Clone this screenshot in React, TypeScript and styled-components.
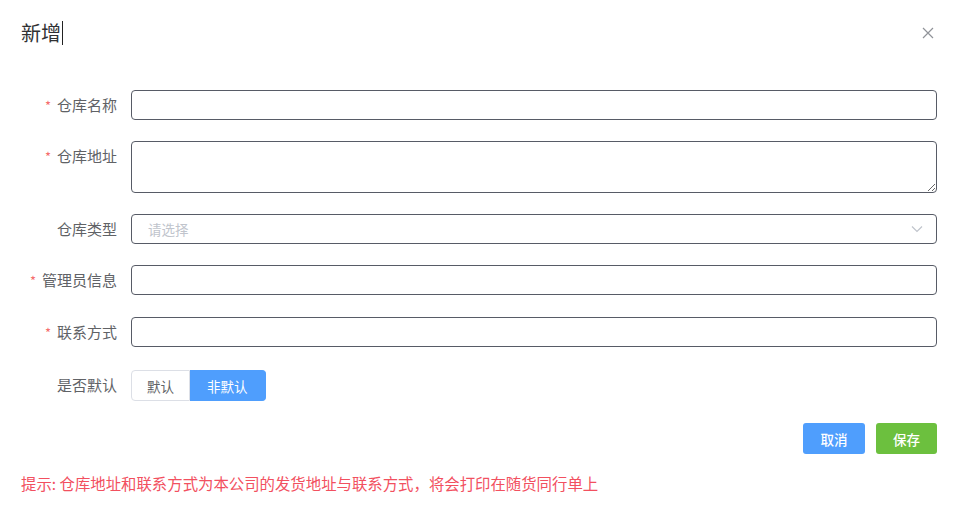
import React from "react";
import styled, { createGlobalStyle } from "styled-components";

const Global = createGlobalStyle`
  html, body { margin: 0; padding: 0; background: #fff; }
  body { font-family: "Noto Sans CJK SC", "Noto Sans", sans-serif; color: #606266; }
  * { box-sizing: border-box; }
`;

const Dialog = styled.div`
  width: 953px;
  height: 517px;
  padding: 21px 16px 0 21px;
  background: #fff;
`;

const Header = styled.div`
  display: flex;
  align-items: center;
  justify-content: space-between;
  height: 24px;
`;

const Title = styled.div`
  display: flex;
  align-items: center;
  font-size: 20px;
  line-height: 24px;
  color: #303133;
`;

const Caret = styled.span`
  display: inline-block;
  width: 1px;
  height: 24px;
  margin-left: 1px;
  background: #222;
`;

const Close = styled.button`
  border: 0;
  background: none;
  padding: 0;
  margin-right: 2px;
  width: 14px;
  height: 14px;
  display: flex;
  align-items: center;
  justify-content: center;
  cursor: pointer;
`;

const Form = styled.div`
  margin-top: 45px;
`;

const Item = styled.div<{ $mb?: number }>`
  display: flex;
  align-items: flex-start;
  margin-bottom: ${(p) => p.$mb ?? 21}px;
`;

const Label = styled.label`
  width: 110px;
  height: 30px;
  flex: none;
  text-align: right;
  padding-right: 14px;
  font-size: 15px;
  line-height: 30px;
  color: #606266;
  white-space: nowrap;
`;

const Star = styled.span`
  color: #f56c6c;
  margin-right: 6px;
  font-size: 13px;
  line-height: 1;
`;

const Input = styled.input`
  flex: 1;
  height: 30px;
  border: 1px solid #575b66;
  border-radius: 4px;
  padding: 0 15px;
  font-size: 14px;
  font-family: inherit;
  color: #606266;
  outline: none;
  background: #fff;
`;

const TextArea = styled.textarea`
  flex: 1;
  height: 52px;
  border: 1px solid #575b66;
  border-radius: 4px;
  padding: 5px 15px;
  font-size: 14px;
  font-family: inherit;
  color: #606266;
  outline: none;
  resize: vertical;
  display: block;
`;

const Select = styled.div`
  flex: 1;
  height: 30px;
  border: 1px solid #575b66;
  border-radius: 4px;
  padding: 0 13px 0 16px;
  display: flex;
  align-items: center;
  justify-content: space-between;
`;

const Placeholder = styled.span`
  font-size: 13.5px;
  color: #c0c4cc;
`;

const RadioGroup = styled.div`
  display: flex;
  height: 31px;
`;

const RadioButton = styled.button<{ $active?: boolean; $first?: boolean }>`
  height: 31px;
  padding: 0 ${(p) => (p.$first ? 15 : 17)}px;
  font-size: 13.5px;
  font-family: inherit;
  border: 1px solid ${(p) => (p.$active ? "#4f9efd" : "#dcdfe6")};
  border-left-width: ${(p) => (p.$first ? 1 : 0)}px;
  background: ${(p) => (p.$active ? "#4f9efd" : "#fff")};
  color: ${(p) => (p.$active ? "#fff" : "#606266")};
  border-radius: ${(p) => (p.$first ? "4px 0 0 4px" : "0 4px 4px 0")};
  cursor: pointer;
`;

const Footer = styled.div`
  display: flex;
  justify-content: flex-end;
  gap: 11px;
`;

const Btn = styled.button<{ $color: string; $w: number }>`
  width: ${(p) => p.$w}px;
  height: 31px;
  border: 0;
  border-radius: 3px;
  background: ${(p) => p.$color};
  color: #fff;
  font-size: 13.5px;
  font-weight: 500;
  font-family: inherit;
  cursor: pointer;
`;

const Hint = styled.div`
  margin-top: 18px;
  font-size: 15.4px;
  line-height: 22px;
  color: #f2505f;
`;

export default function App() {
  return (
    <>
      <Global />
      <Dialog>
        <Header>
          <Title>
            新增
            <Caret />
          </Title>
          <Close aria-label="close">
            <svg width="12" height="12" viewBox="0 0 12 12">
              <path d="M1 1L11 11M11 1L1 11" stroke="#909399" strokeWidth="1.2" />
            </svg>
          </Close>
        </Header>
        <Form>
          <Item>
            <Label>
              <Star>*</Star>仓库名称
            </Label>
            <Input />
          </Item>
          <Item>
            <Label>
              <Star>*</Star>仓库地址
            </Label>
            <TextArea />
          </Item>
          <Item>
            <Label>仓库类型</Label>
            <Select>
              <Placeholder>请选择</Placeholder>
              <svg width="12" height="8" viewBox="0 0 12 8">
                <path d="M1 1.5L6 6.5L11 1.5" stroke="#c0c4cc" strokeWidth="1.2" fill="none" />
              </svg>
            </Select>
          </Item>
          <Item $mb={22}>
            <Label>
              <Star>*</Star>管理员信息
            </Label>
            <Input />
          </Item>
          <Item $mb={23}>
            <Label>
              <Star>*</Star>联系方式
            </Label>
            <Input />
          </Item>
          <Item $mb={22}>
            <Label>是否默认</Label>
            <RadioGroup>
              <RadioButton $first>默认</RadioButton>
              <RadioButton $active>非默认</RadioButton>
            </RadioGroup>
          </Item>
        </Form>
        <Footer>
          <Btn $color="#4f9efd" $w={62}>取消</Btn>
          <Btn $color="#6cc03e" $w={61}>保存</Btn>
        </Footer>
        <Hint>提示: 仓库地址和联系方式为本公司的发货地址与联系方式，将会打印在随货同行单上</Hint>
      </Dialog>
    </>
  );
}
